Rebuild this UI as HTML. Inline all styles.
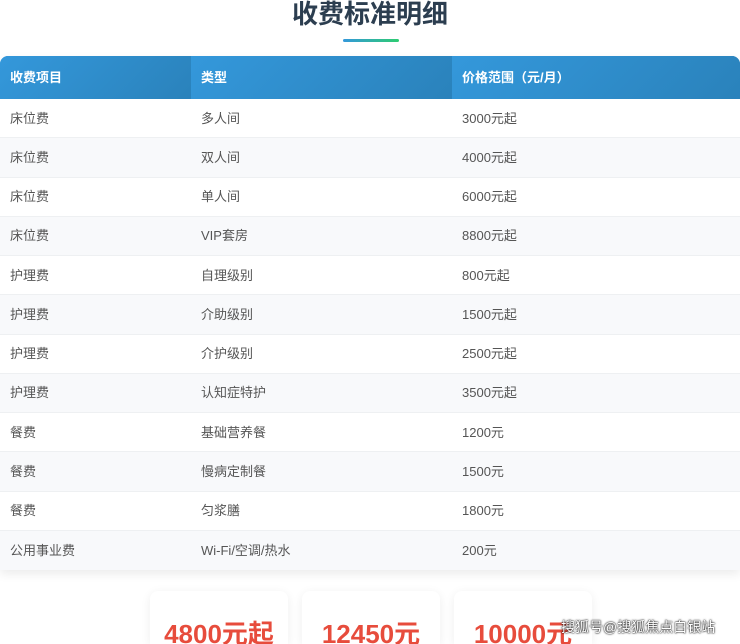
<!DOCTYPE html>
<html style="width:740px;height:644px;overflow:hidden"><head><meta charset="utf-8"><style>
*{margin:0;padding:0;box-sizing:border-box}
body{width:740px;height:644px;overflow:hidden;background:#fff;font-family:"Liberation Sans","Noto Sans CJK SC",sans-serif;position:relative}
h1{position:absolute;top:-3px;left:0;width:740px;text-align:center;font-size:26px;font-weight:bold;color:#2c3e50;line-height:34px}
.bar{position:absolute;left:343px;top:39px;width:56px;height:3px;background:linear-gradient(90deg,#3498db,#2ecc71);border-radius:2px}
.tbl{position:absolute;left:0;top:56px;width:740px;border-radius:8px 8px 0 0;overflow:hidden;box-shadow:0 4px 10px rgba(0,0,0,0.08)}
.row{display:flex;height:39.25px;align-items:center;font-size:13px;color:#555;border-bottom:1px solid #eef0f2;padding-bottom:2px}
.row div{padding-left:10px}
.c1{width:191px}.c2{width:261px}.c3{flex:1}
.hd{height:43px;background:linear-gradient(135deg,#3498db,#2980b9);color:#fff;font-weight:bold;font-size:13px;display:flex}
.hd div{height:43px;line-height:43px;padding-left:10px;background:linear-gradient(135deg,#3498db,#2a82bb)}
.card{position:absolute;top:591px;width:138px;height:53px;overflow:hidden;background:#fff;border-radius:8px 8px 0 0;box-shadow:0 2px 10px rgba(0,0,0,0.07);text-align:center;color:#e74c3c;font-weight:bold;font-size:26px;padding-top:27px;line-height:32px}
.wm{position:absolute;left:561px;top:617px;color:#fff;font-size:14px;text-shadow:0 0 2px #000,0 0 1px #000}
</style></head><body>
<h1>收费标准明细</h1><div class="bar"></div>
<div class="tbl">
<div class="hd"><div class="c1">收费项目</div><div class="c2">类型</div><div class="c3">价格范围（元/月）</div></div>
<div>
<div class="row" style="background:#fff"><div class="c1">床位费</div><div class="c2">多人间</div><div class="c3">3000元起</div></div>
<div class="row" style="background:#f8f9fb"><div class="c1">床位费</div><div class="c2">双人间</div><div class="c3">4000元起</div></div>
<div class="row" style="background:#fff"><div class="c1">床位费</div><div class="c2">单人间</div><div class="c3">6000元起</div></div>
<div class="row" style="background:#f8f9fb"><div class="c1">床位费</div><div class="c2">VIP套房</div><div class="c3">8800元起</div></div>
<div class="row" style="background:#fff"><div class="c1">护理费</div><div class="c2">自理级别</div><div class="c3">800元起</div></div>
<div class="row" style="background:#f8f9fb"><div class="c1">护理费</div><div class="c2">介助级别</div><div class="c3">1500元起</div></div>
<div class="row" style="background:#fff"><div class="c1">护理费</div><div class="c2">介护级别</div><div class="c3">2500元起</div></div>
<div class="row" style="background:#f8f9fb"><div class="c1">护理费</div><div class="c2">认知症特护</div><div class="c3">3500元起</div></div>
<div class="row" style="background:#fff"><div class="c1">餐费</div><div class="c2">基础营养餐</div><div class="c3">1200元</div></div>
<div class="row" style="background:#f8f9fb"><div class="c1">餐费</div><div class="c2">慢病定制餐</div><div class="c3">1500元</div></div>
<div class="row" style="background:#fff"><div class="c1">餐费</div><div class="c2">匀浆膳</div><div class="c3">1800元</div></div>
<div class="row" style="background:#f8f9fb;border-bottom:none"><div class="c1">公用事业费</div><div class="c2">Wi-Fi/空调/热水</div><div class="c3">200元</div></div>
</div></div>
<div class="card" style="left:150px">4800元起</div>
<div class="card" style="left:302px">12450元</div>
<div class="card" style="left:454px">10000元</div>
<div class="wm">搜狐号@搜狐焦点白银站</div>
</body></html>
